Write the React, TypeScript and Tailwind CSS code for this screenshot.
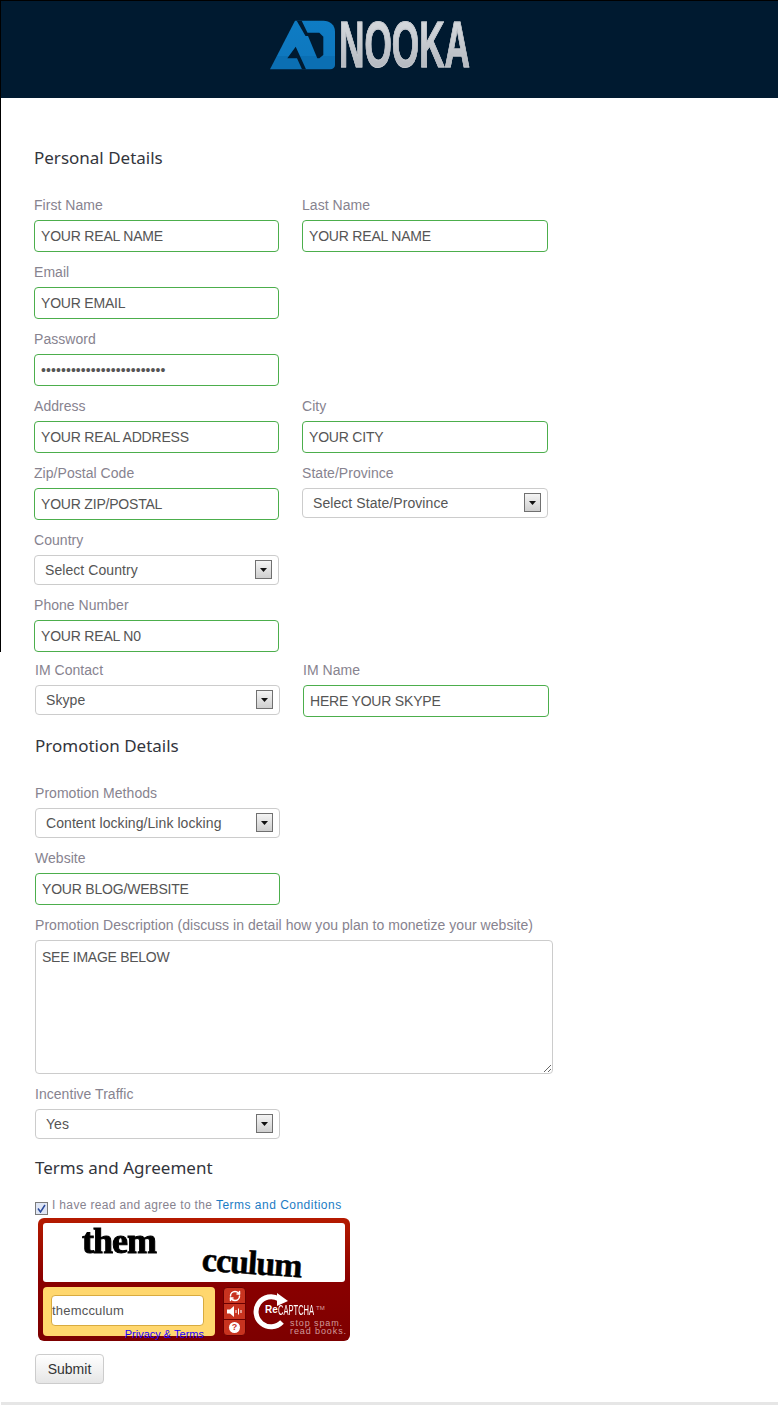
import React from 'react';
import { RefreshCw } from 'lucide-react';

const sans = "font-['Liberation_Sans',Arial,sans-serif]";
const headingFont = "font-['Noto_Sans',sans-serif]";

const Label = ({ children }: { children: React.ReactNode }) => (
  <label className="block h-5 mb-[5px] text-[14px] leading-5 tracking-[0.04px] text-[#87838f]">{children}</label>
);

const Field = ({ label, value, type = 'text', className = 'w-[245px]' }: { label: string; value: string; type?: string; className?: string }) => (
  <div className="mb-[10px]">
    <Label>{label}</Label>
    <input
      type={type}
      defaultValue={value}
      className={`block h-[32px] rounded-[4px] border border-[#4cae4c] bg-white px-[6px] text-[14px] text-[#555] outline-none ${type === 'password' ? 'tracking-[0.08px]' : 'tracking-[-0.2px]'} ${className}`}
    />
  </div>
);

const Dropdown = ({ label, value, className = 'w-[245px]' }: { label: string; value: string; className?: string }) => (
  <div className="mb-[10px]">
    <Label>{label}</Label>
    <div className={`relative h-[30px] ${className}`}>
      <select
        defaultValue={value}
        className="block h-full w-full appearance-none rounded-[4px] border border-[#ccc] bg-white pl-[10px] text-[14px] tracking-[0.07px] text-[#555] outline-none"
      >
        <option>{value}</option>
      </select>
      <span className="pointer-events-none absolute right-[7px] top-[5px] flex h-[19px] w-[17px] items-center justify-center border border-[#707070] bg-gradient-to-b from-[#f4f4f4] to-[#cfcfcf]">
        <svg width="7" height="4" viewBox="0 0 7 4"><path d="M0 0h7L3.500 4z" fill="#111" /></svg>
      </span>
    </div>
  </div>
);

const Heading = ({ children, className }: { children: React.ReactNode; className: string }) => (
  <h2 className={`${headingFont} text-[17px] leading-5 text-[#33353c] ${className}`}>{children}</h2>
);

const Logo = () => (
  <div className="flex items-start">
    <svg width="66" height="50" viewBox="0 0 66 50" className="block shrink-0">
      <defs>
        <linearGradient id="mark" x1="0" y1="0" x2="0" y2="1">
          <stop offset="0" stopColor="#0e7cc4" />
          <stop offset="0.72" stopColor="#0e78bf" />
          <stop offset="0.73" stopColor="#0b6fb3" />
          <stop offset="1" stopColor="#0b6fb3" />
        </linearGradient>
      </defs>
      <path d="M0 49.300L25 .7H53.300C60 .7 65 5 65 11.700V45C65 47.500 63 49.300 60 49.300Z" fill="url(#mark)" />
      {/* slit, A counter and D counter */}
      <path d="M26.700 .7H31.700L39 16H35.500Z" fill="#001a30" />
      <path d="M17.300 38.300L25.700 26.700L36 49.300H32L27 38.300Z" fill="#001a30" />
      <path d="M36.700 12.700H49.300L53.300 16.700V35L49.300 38.300H47.300Z" fill="#001a30" />
    </svg>
    <div className="ml-[3px] mt-[-2px] w-[132px]">
      <span className="inline-block origin-left scale-x-[0.55] whitespace-nowrap bg-gradient-to-b from-[#d8dbdf] to-[#b1b6bd] bg-clip-text text-[64px] font-bold leading-[54px] text-transparent [-webkit-text-stroke:1px_#c4c8cd]">
        NOOKA
      </span>
    </div>
  </div>
);

const Captcha = () => (
  <div className="ml-[3px] mt-[3px] h-[123px] w-[312px] rounded-[6px] bg-gradient-to-b from-[#b51a00] via-[#8a0000] to-[#7d0000] p-[5px]">
    <div className="flex h-[59px] w-[302px] rounded-[3px] bg-white">
      <span className="ml-[39px] mt-[0px] h-fit font-['Liberation_Serif',serif] text-[36px] font-bold leading-[36px] tracking-[-1px] text-black blur-[0.5px] [-webkit-text-stroke:1px_black]">them</span>
      <span className="ml-[46px] mt-[22px] h-fit rotate-[4deg] font-['Liberation_Serif',serif] text-[34px] font-bold leading-[36px] tracking-[-1px] text-black [-webkit-text-stroke:0.5px_black]">cculum</span>
    </div>
    <div className="mt-[5px] flex">
      <div className="relative h-[49px] w-[172px] shrink-0 rounded-[4px] bg-[#ffd76e] px-[8px] pt-[8px]">
        <input
          defaultValue="themcculum"
          className="block h-[31px] w-[153px] rounded-[4px] border border-[#d8ab3f] bg-white px-[0px] text-[13px] tracking-[0.2px] text-[#555] outline-none"
        />
        <a className="absolute bottom-[-4px] right-[11px] whitespace-nowrap text-[11px] leading-[12px] text-[#1a00ff]">Privacy &amp; Terms</a>
      </div>
      <div className="ml-[8px] flex h-[49px] w-[23px] shrink-0 flex-col divide-y divide-[#6b0000] overflow-hidden rounded-[4px] border border-[#6b0000] bg-[#c8331f]">
        <div className="flex flex-1 items-center justify-center">
          <RefreshCw size={12} strokeWidth={3} color="#fff" />
        </div>
        <div className="flex flex-1 items-center justify-center">
          <svg width="15" height="11" viewBox="0 0 15 11">
            <path d="M0 3.500H3L7 0V11L3 7.500H0Z" fill="#fff" />
            <path d="M9 4v3M11.500 2.500v6M14 4v3" stroke="#fff" strokeWidth="1" />
          </svg>
        </div>
        <div className="flex flex-1 items-center justify-center">
          <span className="flex h-[11px] w-[11px] items-center justify-center rounded-full bg-white text-[9px] font-bold leading-none text-[#c8331f]">?</span>
        </div>
      </div>
      <div className="relative ml-[6px] h-[49px] w-[93px] shrink-0">
        <svg width="38" height="40" viewBox="0 0 38 40" className="absolute left-0 top-[5px]">
          <path d="M30 30A15 15 0 1 1 27 7" fill="none" stroke="#fff" strokeWidth="5" />
          <path d="M25 1L36 9L25 14Z" fill="#fff" />
        </svg>
        <span className="absolute left-[13px] top-[17px] text-[10px] font-bold leading-3 text-white">Re</span>
        <span className="absolute left-[26px] top-[16px] origin-left scale-x-[0.54] whitespace-nowrap text-[14px] leading-[15px] text-white">CAPTCHA</span>
        <span className="absolute left-[64px] top-[18px] text-[6px] leading-[6px] text-[#d9a0a0]">TM</span>
        <span className="absolute left-[38px] top-[32px] whitespace-nowrap text-[9px] leading-[8px] tracking-[0.9px] text-[#d09a9a]">stop spam.<br />read books.</span>
      </div>
    </div>
  </div>
);

export default function App() {
  return (
    <div className={`${sans} w-[778px] h-[1409px] overflow-hidden bg-white`}>
      <header className="flex h-[98px] items-start justify-center border-t border-l border-black bg-[#001a30] pt-[19px] pr-[39px]">
        <Logo />
      </header>

      {/* first part, has the black edge on the left */}
      <div className="h-[554px] border-l border-black pl-[33px]">
        <Heading className="pt-[50px] mb-[27px]">Personal Details</Heading>
        <div className="flex gap-[23px]">
          <Field label="First Name" value="YOUR REAL NAME" />
          <Field label="Last Name" value="YOUR REAL NAME" className="w-[246px]" />
        </div>
        <Field label="Email" value="YOUR EMAIL" />
        <Field label="Password" value="YOUR PASSWORD HERE ONLY!!" type="password" />
        <div className="flex gap-[23px]">
          <Field label="Address" value="YOUR REAL ADDRESS" />
          <Field label="City" value="YOUR CITY" className="w-[246px]" />
        </div>
        <div className="flex gap-[23px]">
          <Field label="Zip/Postal Code" value="YOUR ZIP/POSTAL" />
          <Dropdown label="State/Province" value="Select State/Province" className="w-[246px]" />
        </div>
        <Dropdown label="Country" value="Select Country" />
        <Field label="Phone Number" value="YOUR REAL N0" />
      </div>

      <div className="pl-[35px] pt-[8px]">
        <div className="flex gap-[23px]">
          <Dropdown label="IM Contact" value="Skype" />
          <Field label="IM Name" value="HERE YOUR SKYPE" className="w-[246px]" />
        </div>
        <Heading className="mt-[9px] mb-[27px]">Promotion Details</Heading>
        <Dropdown label="Promotion Methods" value="Content locking/Link locking" />
        <Field label="Website" value="YOUR BLOG/WEBSITE" />
        <div className="mb-[10px]">
          <Label>Promotion Description (discuss in detail how you plan to monetize your website)</Label>
          <textarea
            defaultValue="SEE IMAGE BELOW"
            className="block h-[134px] w-[518px] rounded-[4px] border border-[#ccc] bg-white px-[6px] py-[6px] text-[14px] leading-5 tracking-[-0.27px] text-[#555] outline-none"
          />
        </div>
        <Dropdown label="Incentive Traffic" value="Yes" />
        <Heading className="mt-[19px] mb-[17px]">Terms and Agreement</Heading>
        <div className="flex h-[20px] items-center text-[12px] tracking-[0.34px] text-[#87838f]">
          <span className="mr-[4px] mt-[6px] flex h-[13px] w-[13px] items-center justify-center border border-[#7b7b7b] bg-[#dfe6f5]">
            <svg width="9" height="9" viewBox="0 0 9 9"><path d="M1 4.500L3.500 8 8 1" fill="none" stroke="#2b4a9b" strokeWidth="1.500" /></svg>
          </span>
          I have read and agree to the&nbsp;<a className="tracking-[0.48px] text-[#1b7cc4]">Terms and Conditions</a>
        </div>
        <Captcha />
        <button className="mt-[13px] block h-[30px] w-[69px] rounded-[4px] border border-[#ccc] bg-gradient-to-b from-white to-[#e6e6e6] text-[14px] text-[#333]">
          Submit
        </button>
        <div className="ml-[-34px] mt-[18px] h-[3px] w-[777px] bg-[#e6e6e6]" />
      </div>
    </div>
  );
}
